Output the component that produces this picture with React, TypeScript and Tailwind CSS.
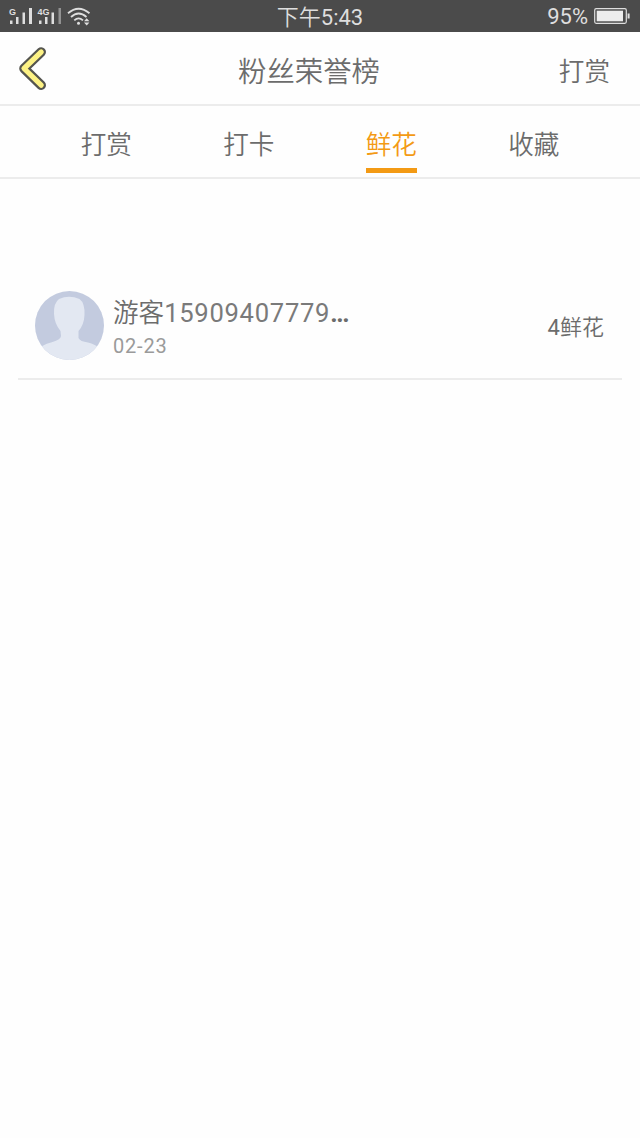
import { useState } from "react";
import clsx from "clsx";

const tabs = [
  { key: "reward", title: "打赏" },
  { key: "checkin", title: "打卡" },
  { key: "flower", title: "鲜花" },
  { key: "collect", title: "收藏" },
];

const fans = [
  { id: 1, prefix: "游客", phone: "15909407779", date: "02-23", count: 4, unit: "鲜花" },
];

function SignalIcons() {
  return (
    <svg width="92" height="32" viewBox="0 0 92 32" fill="#dedede">
      <text x="9" y="14.5" fontSize="9" fontFamily="Liberation Sans, sans-serif" fontWeight="bold">G</text>
      <rect x="10" y="20.5" width="2.5" height="3.5" />
      <rect x="16" y="17" width="2.5" height="7" />
      <rect x="22.5" y="12.5" width="2.5" height="11.5" />
      <rect x="29" y="8" width="3" height="16" />
      <text x="37.5" y="14.5" fontSize="9" fontFamily="Liberation Sans, sans-serif" fontWeight="bold">4G</text>
      <rect x="39" y="20.5" width="2.5" height="3.5" />
      <rect x="45" y="17" width="2.5" height="7" />
      <rect x="51.5" y="12.5" width="2.5" height="11.5" />
      <rect x="58.5" y="8" width="2.5" height="16" fill="#929292" />
      <g fill="none" stroke="#dedede" strokeWidth="1.8">
        <path d="M68 13.2Q78.5 4.2 89.5 13.2" />
        <path d="M71 17Q78.5 10 86.5 17" />
        <path d="M74.3 20.4Q78.5 16.4 83 20.4" />
      </g>
      <circle cx="78.5" cy="23.2" r="1.5" />
      <path d="M84 21.3L86.7 18.2L89.4 21.3ZM84 22.5L86.7 25.6L89.4 22.5Z" />
    </svg>
  );
}

function Battery() {
  return (
    <svg width="36" height="18" viewBox="0 0 36 18">
      <rect x="0.7" y="1.7" width="31.6" height="14.6" rx="1.5" fill="none" stroke="#dedede" strokeWidth="1.2" />
      <rect x="2.7" y="3.7" width="26.3" height="10.6" fill="#ececec" />
      <rect x="33.6" y="6.5" width="2" height="5" fill="#dedede" />
    </svg>
  );
}

function BackIcon() {
  return (
    <svg width="34" height="48" viewBox="0 0 34 48" fill="none" strokeLinecap="round" strokeLinejoin="round">
      <path d="M25.2 8L8 24.5L25.2 41.2" stroke="#55554f" strokeWidth="9.6" />
      <path d="M25.2 8L8 24.5L25.2 41.2" stroke="#fdf284" strokeWidth="5.2" />
    </svg>
  );
}

function Avatar() {
  return (
    <svg className="shrink-0 rounded-full" width="69" height="69" viewBox="0 0 69 69">
      <rect width="69" height="69" fill="#c3cbdf" />
      <path
        d="M24 8Q34 3.5 44.5 8Q50 12 49.5 24Q49 34 43.5 40V47Q45 50.5 53 51.5Q60 53 66 58V69H3V58Q7 54 16 51.5Q26 48.5 26 45L25.5 40Q19.5 33 19 23Q18.5 12 24 8Z"
        fill="#e3e8f2"
      />
    </svg>
  );
}

export default function App() {
  const [active, setActive] = useState("flower");

  return (
    <div className="flex h-[1138px] w-[640px] flex-col bg-[#fefefe] font-['Roboto','Noto_Sans_CJK_SC',sans-serif] font-[350] text-[#6c6c6c]">
      <div className="grid h-8 grid-cols-[1fr_auto_1fr] items-center bg-[#4b4b4b] pr-[10px] text-[22px] leading-[28px] text-[#dedede]">
        <SignalIcons />
        <span className="pt-[3px] pl-[10px]">
          下午<span className="font-normal">5:43</span>
        </span>
        <div className="flex items-center justify-end gap-[6px]">
          <span className="pt-[2px] font-normal">95%</span>
          <Battery />
        </div>
      </div>

      <header className="grid h-[74px] grid-cols-[1fr_auto_1fr] items-center border-b-2 border-[#ececec] pr-[30px] pl-4">
        <button className="w-[34px]">
          <BackIcon />
        </button>
        <h1 className="pt-[10px] pr-[8px] text-[28.4px]">粉丝荣誉榜</h1>
        <button className="justify-self-end pt-[9px] text-[25.6px]">打赏</button>
      </header>

      <nav className="grid h-[73px] grid-cols-4 border-b-2 border-[#ececec] px-[35px] text-[25.6px]">
        {tabs.map((tab) => (
          <button key={tab.key} className="flex justify-center" onClick={() => setActive(tab.key)}>
            <span
              className={clsx(
                "h-[67px] border-b-[5px] pt-5 leading-[38px]",
                active === tab.key ? "border-[#f39a14] text-[#f39a14]" : "border-transparent"
              )}
            >
              {tab.title}
            </span>
          </button>
        ))}
      </nav>

      <ul className="mx-[18px] mt-[94px]">
        {fans.map((fan) => (
          <li key={fan.id} className="flex h-[107px] items-center border-b-2 border-[#ececec] pr-[18px] pl-[17px]">
            <Avatar />
            <div className="ml-[9px] flex-1 pt-[5px]">
              <p className="text-[25.6px] leading-[36px]">
                {fan.prefix}
                <span className="font-normal tracking-[0.7px] text-[#7a7a7a]">{fan.phone}</span>
                <span className="font-bold tracking-[-1.4px]">...</span>
              </p>
              <p className="text-[20px] leading-[30px] tracking-[0.8px] text-[#9a9a9a]">
                <span className="font-normal">{fan.date}</span>
              </p>
            </div>
            <span className="pt-[4px] text-[22px]">
              <span className="font-normal">{fan.count}</span>
              {fan.unit}
            </span>
          </li>
        ))}
      </ul>
    </div>
  );
}
